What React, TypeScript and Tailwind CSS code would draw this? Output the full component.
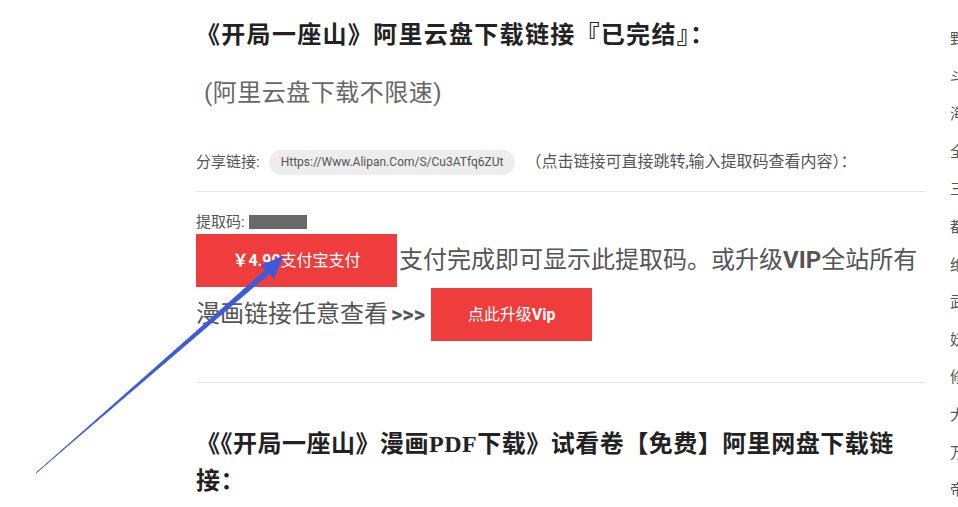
const sans = "font-['Roboto','Noto_Sans_CJK_SC',sans-serif]";
const serif = "font-['Liberation_Serif','Noto_Sans_CJK_SC',serif]";

const sideChars = ["野", "斗", "海", "全", "三", "都", "绝", "武", "妖", "修", "大", "万", "帝"];

function Arrow() {
  // tapering arrow drawn over the page, pointing at the pay button
  return (
    <svg className="pointer-events-none absolute left-0 top-0" width="958" height="507">
      <polygon
        points="36,473 269.4,273.6 273.6,278.4 283,256 261.4,265.6 265.4,270.2 36,473"
        fill="#3b5bdb"
        stroke="#3b5bdb"
        strokeWidth="0.8"
        strokeLinejoin="round"
      />
    </svg>
  );
}

export default function App() {
  return (
    <div className={`relative h-[507px] w-[958px] overflow-hidden bg-white ${sans}`}>
      <div className="flex">
        <div className="w-[196px] shrink-0" />
        <div className="w-[730px] shrink-0">
          <h2 className={`mt-[15px] text-[24px] font-bold leading-[40px] tracking-[1.3px] text-[#222] ${serif}`}>
            《开局一座山》阿里云盘下载链接『已完结』：
          </h2>
          <p className="mt-[18px] pl-[8px] text-[24px] leading-[40px] tracking-[0.5px] text-[#666]">
            (阿里云盘下载不限速)
          </p>

          <div className="mt-[36px] flex h-[26px] items-center text-[15px] text-[#555]">
            <span>分享链接:</span>
            <span className="ml-[9px] flex h-[25px] items-center rounded-full bg-[#ededed] pl-[12px] pr-[12px] text-[12px] text-[#555]">
              Https://Www.Alipan.Com/S/Cu3ATfq6ZUt
            </span>
            <span className="ml-[10px] text-[16px]">（点击链接可直接跳转,输入提取码查看内容）：</span>
          </div>

          <div className="mt-[16px] h-px bg-[#e6e6e6]" />

          <div className="mt-[20px] flex h-[20px] items-center text-[15px] text-[#555]">
            <span>提取码:</span>
            <span className="ml-[4px] h-[14px] w-[58px] bg-[#696969]" />
          </div>

          <div className="mt-[2px] flex items-center">
            <span className="flex h-[53px] w-[201px] items-center justify-center bg-[#ef3d3d] text-[16px] text-white">
              <b>￥4.90</b>支付宝支付
            </span>
            <span className="ml-[2px] text-[24px] leading-[53px] text-[#555]">
              支付完成即可显示此提取码。或升级<b>VIP</b>全站所有
            </span>
          </div>
          <div className="mt-px flex items-center">
            <span className="text-[24px] leading-[53px] text-[#555]">漫画链接任意查看</span>
            <b className="ml-[3px] text-[22px] leading-[53px] text-[#555]">&gt;&gt;&gt;</b>
            <span className="ml-[6px] flex h-[53px] w-[161px] items-center justify-center bg-[#ef3d3d] text-[16px] text-white">
              点此升级<b>Vip</b>
            </span>
          </div>

          <div className="mt-[41px] h-px bg-[#e6e6e6]" />

          <h2 className={`mt-[43px] text-[24px] font-bold leading-[37px] tracking-[0.5px] text-[#222] ${serif}`}>
            《《开局一座山》漫画PDF下载》试看卷【免费】阿里网盘下载链
            <br />
            接：
          </h2>
        </div>
        <div className="ml-[24px] w-[8px] shrink-0 overflow-hidden pt-[21px]">
          <ul className="w-[40px] text-[15px] leading-[37.6px] text-[#555]">
            {sideChars.map((c) => (
              <li key={c}>{c}</li>
            ))}
          </ul>
        </div>
      </div>
      <Arrow />
    </div>
  );
}
